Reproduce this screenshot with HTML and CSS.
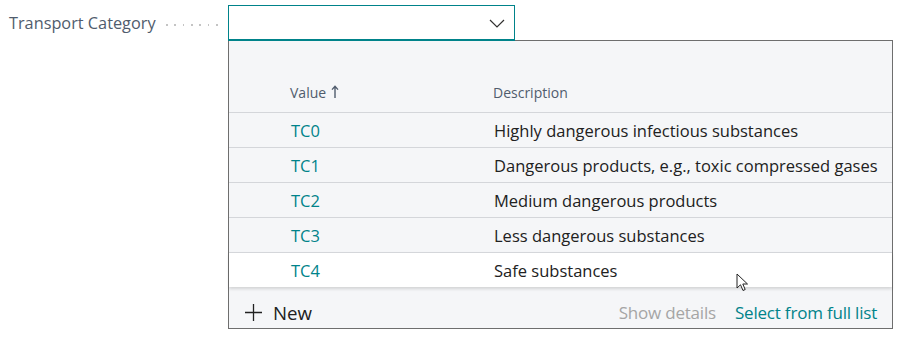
FILE: index.html
```html
<!DOCTYPE html>
<html>
<head>
<meta charset="utf-8">
<link rel="stylesheet" href="styles.css">
</head>
<body>
<div class="field">
  <div class="label">Transport Category</div>
  <div class="leader"></div>
  <div class="combo">
    <div class="input">
      <svg class="chev" width="16" height="9" viewBox="0 0 16 9"><path d="M1 1 L8 8 L15 1" fill="none" stroke="#323130" stroke-width="1.2"/></svg>
    </div>
    <div class="panel">
      <div class="head">
        <div class="c1">Value <svg class="arrow" width="8" height="13" viewBox="0 0 8 13"><path d="M4 1.2 V13 M1 4.6 L4 1.2 L7 4.6" fill="none" stroke="#505c6d" stroke-width="1.4"/></svg></div>
        <div class="c2">Description</div>
      </div>
      <div class="row"><div class="c1 val">TC0</div><div class="c2">Highly dangerous infectious substances</div></div>
      <div class="row"><div class="c1 val">TC1</div><div class="c2">Dangerous products, e.g., toxic compressed gases</div></div>
      <div class="row"><div class="c1 val">TC2</div><div class="c2">Medium dangerous products</div></div>
      <div class="row"><div class="c1 val">TC3</div><div class="c2">Less dangerous substances</div></div>
      <div class="row sel"><div class="c1 val">TC4</div><div class="c2">Safe substances</div></div>
      <div class="foot">
        <div class="new">
          <svg width="19" height="19" viewBox="0 0 19 19"><path d="M9.5 1 V18 M1 9.5 H18" stroke="#212121" stroke-width="1.3" fill="none"/></svg>
          <span>New</span>
        </div>
        <div class="actions">
          <span class="dis">Show details</span>
          <span class="link">Select from full list</span>
        </div>
      </div>
      <svg class="cursor" width="14" height="20" viewBox="0 0 14 20"><path d="M1 1 L1 15 L4.5 11.8 L7 17.5 L9.2 16.5 L6.8 11 L11.5 11 Z" fill="#fff" stroke="#222" stroke-width="1" stroke-linejoin="round"/></svg>
    </div>
  </div>
</div>
</body>
</html>
```
FILE: styles.css
```css
* { box-sizing: border-box; }
body { margin: 0; background: #fff; font-family: "Open Sans", "Noto Sans", sans-serif; }
.field { display: flex; align-items: flex-start; padding: 5px 0 0 9px; }
.label { font-size: 16.3px; color: #505c6d; height: 36px; line-height: 37px; width: 148px; white-space: nowrap; }
.leader { width: 54px; height: 2px; margin: 19px 8px 0 9px; background: repeating-linear-gradient(to right, #c4c4c4 0 1.6px, transparent 1.6px 8.33px); }
.combo { width: 665px; }
.input { position: relative; z-index: 1; width: 287px; height: 36px; border: 1px solid #00838a; border-bottom-width: 2px; background: #fff; display: flex; align-items: center; justify-content: flex-end; padding-right: 9px; }
.chev { display: block; margin-top: 1px; }
.panel { position: relative; margin-top: -1px; height: 289px; border: 1px solid #6e6e6e; background: #f5f6f8; font-size: 16.5px; color: #212121; }
.head { display: flex; align-items: flex-end; height: 71px; padding-bottom: 10px; font-size: 14px; color: #505c6d; }
.head .c1 { display: flex; align-items: center; gap: 5px; }
.arrow { display: block; margin-top: -3px; }
.c1 { width: 264px; padding-left: 61px; }
.c2 { flex: 1; }
.row { display: flex; align-items: center; height: 35px; border-top: 1px solid #d4d6da; padding-top: 1px; }
.row .c1 { width: 265px; padding-left: 62px; }
.val { color: #00838a; }
.sel { background: #fff; box-shadow: 0 2px 3px rgba(0,0,0,0.14); position: relative; }
.foot { display: flex; justify-content: space-between; align-items: center; height: 40px; padding: 10px 15px 0 15px; font-size: 17px; letter-spacing: -0.2px; }
.new { display: flex; align-items: center; gap: 10px; font-size: 18.7px; letter-spacing: 0; }
.new svg { display: block; }
.actions { display: flex; gap: 19px; }
.dis { color: #a5a5a5; }
.link { color: #00838a; }
.cursor { position: absolute; left: 507px; top: 232px; }
```
